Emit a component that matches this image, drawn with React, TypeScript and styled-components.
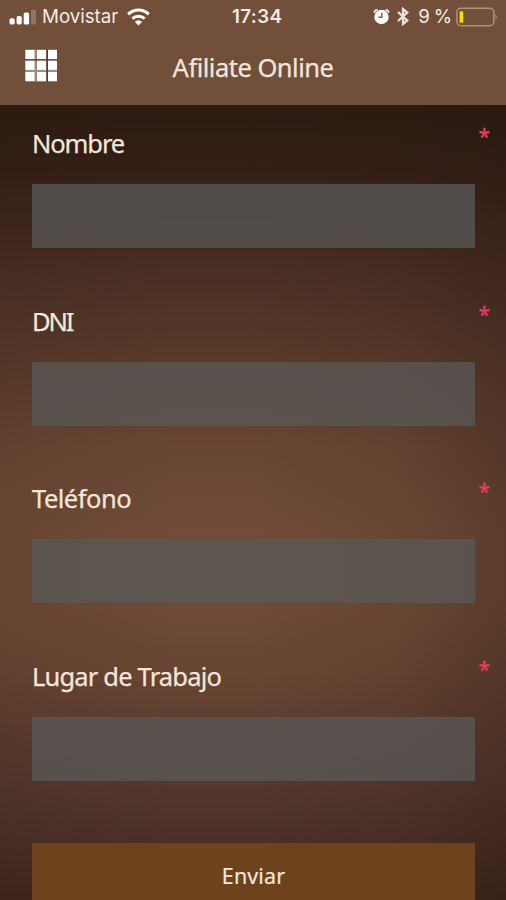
import React from "react";
import styled, { createGlobalStyle } from "styled-components";

const GlobalStyle = createGlobalStyle`
  *, *::before, *::after { box-sizing: border-box; }
  body { margin: 0; overflow: hidden; background: #2c1b13; }
`;

const Screen = styled.main`
  width: 506px;
  height: 900px;
  overflow: hidden;
  display: flex;
  flex-direction: column;
  font-family: "Noto Sans", "Open Sans", sans-serif;
  color: #f3e6db;
`;

const Header = styled.header`
  flex: none;
  height: 105px;
  background: #714f3b;
`;

const StatusBar = styled.div`
  height: 33px;
  display: grid;
  grid-template-columns: 223px auto 1fr;
  align-items: center;
  padding: 0 8px 0 9px;
  font-family: Inter, "Liberation Sans", sans-serif;
  font-size: 18.7px;
  line-height: 33px;
  color: #f6ebe4;
`;

const StatusGroup = styled.div<{ $end?: boolean }>`
  display: flex;
  align-items: center;
  justify-content: ${(p) => (p.$end ? "flex-end" : "flex-start")};

  svg { display: block; flex: none; }
`;

const Carrier = styled.span`
  margin: 0 9px 0 6px;
`;

const Clock = styled.time`
  font-weight: 600;
  letter-spacing: 0.4px;
`;

const StatusIcons = styled.span`
  display: flex;
  align-items: center;
  gap: 7px;
`;

const BatteryLevel = styled.span`
  margin: 0 4px 0 9px;
  word-spacing: -1.5px;
`;

const TitleBar = styled.div`
  height: 72px;
  display: grid;
  grid-template-columns: 33px 1fr 33px;
  align-items: center;
  padding: 0 24px;
`;

const MenuButton = styled.button`
  width: 33px;
  height: 33px;
  margin-top: -7px;
  padding: 0;
  border: 0;
  background: none;

  svg { display: block; }
`;

const Title = styled.h1`
  margin: -4px 0 0;
  font-size: 25.5px;
  font-weight: 400;
  line-height: 36px;
  letter-spacing: -0.5px;
  text-align: center;
  -webkit-text-stroke: 0.25px currentColor;
`;

const Form = styled.form`
  flex: 1;
  display: flex;
  flex-direction: column;
  padding: 15px 31px 0 32px;
  background:
    linear-gradient(90deg, rgba(38, 22, 16, 0.12), rgba(38, 22, 16, 0) 35%, rgba(38, 22, 16, 0) 50%, rgba(38, 22, 16, 0.1) 78%, rgba(38, 22, 16, 0.3)),
    linear-gradient(180deg, #2c1b12 0%, #341f16 8%, #472c22 19%, #573929 30%, #694633 43%, #714c38 53%, #714c38 61%, #674532 71%, #5a3b2d 81%, #50342a 88%, #482d24 94%, #3d241c 100%);
`;

const Field = styled.div`
  height: 177.5px;
  flex: none;
`;

const FieldHeading = styled.div`
  display: flex;
  justify-content: space-between;
  height: 64px;
  margin-right: -15px;
`;

const Label = styled.label<{ $tracking: number }>`
  padding-top: 5px;
  font-size: 25.5px;
  line-height: 36px;
  letter-spacing: ${(p) => p.$tracking}px;
  -webkit-text-stroke: 0.25px currentColor;
`;

const Required = styled.span`
  font-size: 21px;
  line-height: 32px;
  color: #e73d62;
  -webkit-text-stroke: 0.3px currentColor;
`;

const TextInput = styled.input`
  display: block;
  width: 100%;
  height: 64px;
  padding: 0 16px;
  border: 0;
  border-radius: 0;
  outline: 0;
  background: rgba(89, 89, 87, 0.77);
  color: inherit;
  font: inherit;
  font-size: 24px;
`;

const SubmitButton = styled.button`
  flex: none;
  height: 64px;
  margin-top: 13px;
  padding: 0;
  border: 0;
  background: #6c431d;
  color: inherit;
  font-family: inherit;
  font-size: 21.5px;
  letter-spacing: 0.1px;
  -webkit-text-stroke: 0.2px currentColor;
`;

const SignalIcon = () => (
  <svg width="27" height="16" viewBox="0 0 27 16" fill="#fff">
    <rect x="0.5" y="9.2" width="5.2" height="6.3" rx="1.8" />
    <rect x="7.6" y="7" width="5.2" height="8.5" rx="1.8" />
    <rect x="14.7" y="3.5" width="5.4" height="12" rx="1.6" />
    <rect x="22" y="0.5" width="5" height="15" rx="1.6" opacity="0.22" />
  </svg>
);

const WifiIcon = () => (
  <svg width="23" height="18" viewBox="0 0 23 18" fill="none" stroke="#fff" strokeWidth="3">
    <path d="M1.2 6.3C7 0.7 16 0.7 21.8 6.3" />
    <path d="M5.3 10.7C8.9 7.3 14.1 7.3 17.7 10.7" />
    <path d="M11.5 17.6 7.8 13.8Q11.5 10.7 15.2 13.8Z" fill="#fff" stroke="none" />
  </svg>
);

const AlarmIcon = () => (
  <svg width="17" height="17" viewBox="0 0 17 17">
    <path d="M.6 4.7Q.2 1 4.3.9L5 2 1.5 5.2ZM16.4 4.7Q16.8 1 12.7.9L12 2 15.5 5.2Z" fill="#eadfd8" />
    <circle cx="8.5" cy="9" r="7.2" fill="#fff" />
    <path d="M8.8 4.7V9.2H5.4" fill="none" stroke="#85604c" strokeWidth="1.5" />
  </svg>
);

const BluetoothIcon = () => (
  <svg width="12" height="19" viewBox="0 0 12 19" fill="none" stroke="#eee4de" strokeWidth="2.3">
    <path d="M1 5 10.3 13.4 6 17V2L10.3 5.6 1 14" />
  </svg>
);

const BatteryIcon = () => (
  <svg width="42" height="20" viewBox="0 0 42 20">
    <rect x="0.9" y="1.3" width="37" height="17.4" rx="4" fill="none" stroke="#ad9283" strokeWidth="1.5" />
    <rect x="3.6" y="4.2" width="3.6" height="11.6" rx="0.8" fill="#ffdc00" />
    <path d="M39.5 7Q42 10 39.5 13Z" fill="#ad9283" />
  </svg>
);

const GRID_COLUMNS = [1.3, 12.9, 24];
const GRID_ROWS = [0.8, 11.6, 23];

const GridIcon = () => (
  <svg width="33" height="33" viewBox="0 0 33 33">
    <path d="M11.6 0.8V32.4M1.3 22.1H33" stroke="#a08c80" strokeWidth="2.2" />
    <path d="M23.2 0.8V32.4M1.3 10.9H33" stroke="#693026" strokeWidth="1.5" />
    {GRID_ROWS.map((y) =>
      GRID_COLUMNS.map((x) => <rect key={`${x}-${y}`} x={x} y={y} width="9.3" height="9.3" fill="#fff" />)
    )}
  </svg>
);

const FIELDS = [
  { id: "nombre", label: "Nombre", tracking: -1.1 },
  { id: "dni", label: "DNI", tracking: -2.1 },
  { id: "telefono", label: "Teléfono", tracking: -0.5 },
  { id: "lugar", label: "Lugar de Trabajo", tracking: -0.82 },
];

export default function App() {
  return (
    <>
      <GlobalStyle />
      <Screen>
        <Header>
          <StatusBar>
            <StatusGroup>
              <SignalIcon />
              <Carrier>Movistar</Carrier>
              <WifiIcon />
            </StatusGroup>
            <Clock>17:34</Clock>
            <StatusGroup $end>
              <StatusIcons>
                <AlarmIcon />
                <BluetoothIcon />
              </StatusIcons>
              <BatteryLevel>9 %</BatteryLevel>
              <BatteryIcon />
            </StatusGroup>
          </StatusBar>
          <TitleBar>
            <MenuButton type="button">
              <GridIcon />
            </MenuButton>
            <Title>Afiliate Online</Title>
          </TitleBar>
        </Header>
        <Form onSubmit={(e) => e.preventDefault()}>
          {FIELDS.map((f) => (
            <Field key={f.id}>
              <FieldHeading>
                <Label htmlFor={f.id} $tracking={f.tracking}>{f.label}</Label>
                <Required>*</Required>
              </FieldHeading>
              <TextInput id={f.id} required />
            </Field>
          ))}
          <SubmitButton type="submit">Enviar</SubmitButton>
        </Form>
      </Screen>
    </>
  );
}
